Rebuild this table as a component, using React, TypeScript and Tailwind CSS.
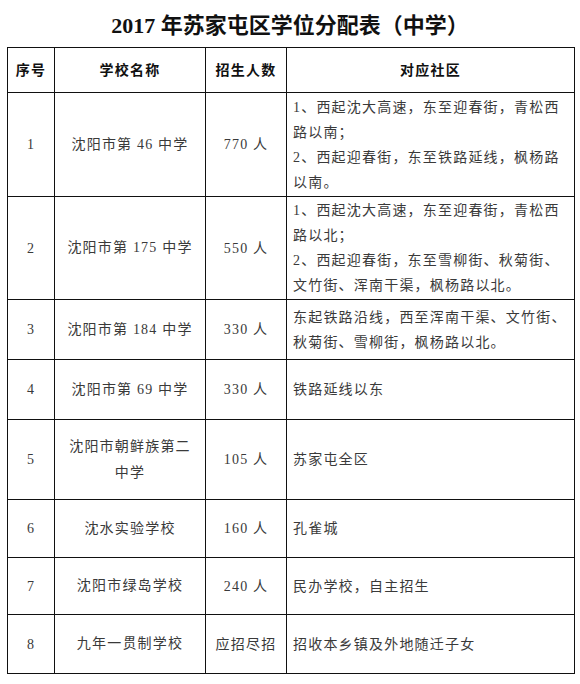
const rows: { no: string; school: React.ReactNode; count: string; area: string[]; h: string }[] = [
  {
    no: '1',
    school: '沈阳市第 46 中学',
    count: '770 人',
    area: ['1、西起沈大高速，东至迎春街，青松西', '路以南；', '2、西起迎春街，东至铁路延线，枫杨路', '以南。'],
    h: 'h-[104px]',
  },
  {
    no: '2',
    school: '沈阳市第 175 中学',
    count: '550 人',
    area: ['1、西起沈大高速，东至迎春街，青松西', '路以北；', '2、西起迎春街，东至雪柳街、秋菊街、', '文竹街、浑南干渠，枫杨路以北。'],
    h: 'h-[103px]',
  },
  {
    no: '3',
    school: '沈阳市第 184 中学',
    count: '330 人',
    area: ['东起铁路沿线，西至浑南干渠、文竹街、', '秋菊街、雪柳街，枫杨路以北。'],
    h: 'h-[60px]',
  },
  { no: '4', school: '沈阳市第 69 中学', count: '330 人', area: ['铁路延线以东'], h: 'h-[60px]' },
  {
    no: '5',
    school: (
      <>
        沈阳市朝鲜族第二
        <br />
        中学
      </>
    ),
    count: '105 人',
    area: ['苏家屯全区'],
    h: 'h-[80px]',
  },
  { no: '6', school: '沈水实验学校', count: '160 人', area: ['孔雀城'], h: 'h-[58px]' },
  { no: '7', school: '沈阳市绿岛学校', count: '240 人', area: ['民办学校，自主招生'], h: 'h-[57px]' },
  { no: '8', school: '九年一贯制学校', count: '应招尽招', area: ['招收本乡镇及外地随迁子女'], h: 'h-[59px]' },
];

const cell = 'border-[1.5px] border-[#111] align-middle p-0';

export default function App() {
  return (
    <div className="w-[580px] h-[684px] bg-white overflow-hidden font-['Liberation_Serif','Noto_Sans_CJK_SC',serif]">
      <h1 className="h-[47px] flex items-center justify-center pt-[4px] text-[22px] font-bold text-[#111] leading-none">
        2017 年苏家屯区学位分配表（中学）
      </h1>
      <table className="ml-[7px] w-[567px] border-collapse table-fixed text-[14px] tracking-[1.2px]">
        <colgroup>
          <col className="w-[47px]" />
          <col className="w-[151px]" />
          <col className="w-[81px]" />
          <col className="w-[288px]" />
        </colgroup>
        <thead>
          <tr className="h-[45px] text-[#111] font-bold">
            <th className={`${cell} text-center`}>序号</th>
            <th className={`${cell} text-center`}>学校名称</th>
            <th className={`${cell} text-center`}>招生人数</th>
            <th className={`${cell} text-center`}>对应社区</th>
          </tr>
        </thead>
        <tbody className="text-[#3a3a3a]">
          {rows.map((r) => (
            <tr key={r.no} className={r.h}>
              <td className={`${cell} text-center`}>{r.no}</td>
              <td className={`${cell} text-center leading-[26px]`}>{r.school}</td>
              <td className={`${cell} text-center`}>{r.count}</td>
              <td className={`${cell} pl-[6px] leading-[25px] whitespace-nowrap`}>
                {r.area.map((line, i) => (
                  <div key={i}>{line}</div>
                ))}
              </td>
            </tr>
          ))}
        </tbody>
      </table>
    </div>
  );
}
